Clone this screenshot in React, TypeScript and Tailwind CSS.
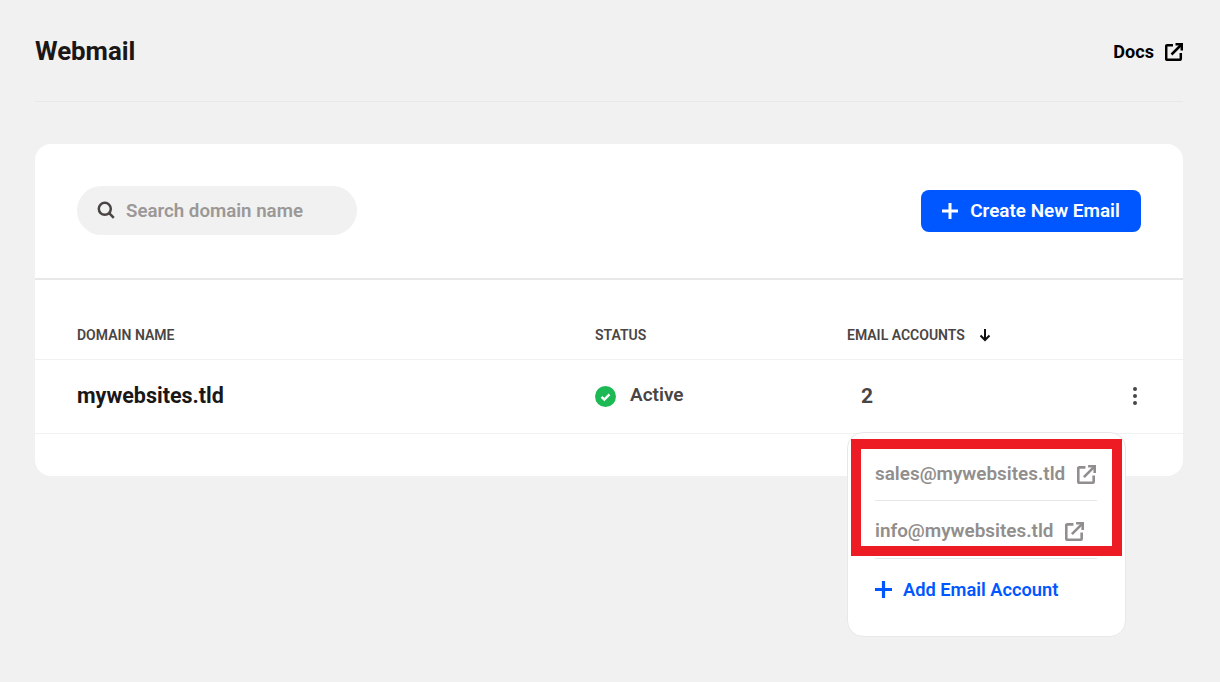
const font = { fontFamily: 'Roboto, sans-serif' };

function ExternalIcon({ className }: { className: string }) {
  return (
    <svg viewBox="0 0 18 18" fill="none" stroke="currentColor" strokeWidth="2.5" className={className}>
      <path d="M8 2.200H2.200a1 1 0 0 0-1 1v12.600a1 1 0 0 0 1 1h12.600a1 1 0 0 0 1-1V10" />
      <path d="M6.500 11.500 16.500 1.500" />
      <path d="M10.500 1.200h6.300v6.300" />
    </svg>
  );
}

function PlusIcon({ className }: { className: string }) {
  return (
    <svg viewBox="0 0 16 16" fill="none" stroke="currentColor" strokeWidth="3" className={className}>
      <path d="M8 0v16M0 8h16" />
    </svg>
  );
}

export default function App() {
  return (
    <div style={font} className="min-h-[682px] bg-[#f1f1f1] pl-[35px] pr-[37px]">
      <header className="flex h-[102px] items-center justify-between border-b border-[#e8e8e8] pt-[2px]">
        <h1 className="text-[25.800px] font-bold text-[#1a1716] leading-none">Webmail</h1>
        <a className="flex items-center gap-[11px] text-[18.100px] font-bold text-black leading-none">
          <span className="pt-[2px]">Docs</span>
          <ExternalIcon className="h-[18px] w-[18px]" />
        </a>
      </header>

      <section className="mt-[42px] h-[332px] rounded-[16px] bg-white">
        <div className="flex h-[136px] items-center justify-between border-b-2 border-[#e8e8e8] px-[42px]">
          <div className="mb-[2px] flex h-[49px] w-[280px] items-center gap-[11px] rounded-full bg-[#f1f1f1] pl-[20px]">
            <svg viewBox="0 0 18 18" fill="none" stroke="#4a4543" strokeWidth="2.500" className="h-[18px] w-[18px]">
              <circle cx="7.800" cy="7.800" r="6" />
              <path d="m12.200 12.200 4.600 4.600" />
            </svg>
            <span className="pt-[2px] text-[18.700px] font-semibold text-[#9b9897]">Search domain name</span>
          </div>
          <button className="flex h-[42px] w-[220px] items-center justify-center gap-[12px] rounded-[8px] bg-[#0057ff] text-[18.900px] font-semibold text-white">
            <PlusIcon className="h-[16px] w-[16px]" />
            <span className="pt-[1px]">Create New Email</span>
          </button>
        </div>

        <div className="grid h-[80px] grid-cols-[518px_252px_1fr] items-center border-b border-[#f1f1f1] px-[42px] pt-[31px] text-[14px] font-semibold text-[#4a4543]">
          <span>DOMAIN NAME</span>
          <span>STATUS</span>
          <span className="flex items-center gap-[14px]">
            EMAIL ACCOUNTS
            <svg viewBox="0 0 12 14" fill="none" stroke="#111" strokeWidth="2" className="h-[14px] w-[12px]">
              <path d="M6 1v11M1.500 7.500 6 12l4.500-4.500" />
            </svg>
          </span>
        </div>

        <div className="grid h-[74px] grid-cols-[518px_252px_1fr] items-center border-b border-[#f1f1f1] px-[42px]">
          <span className="text-[21.500px] font-bold text-[#1a1716]">mywebsites.tld</span>
          <span className="flex items-center gap-[14px] text-[19px] font-semibold text-[#4a4543]">
            <svg viewBox="0 0 21 21" className="h-[21px] w-[21px]">
              <circle cx="10.500" cy="10.500" r="10.500" fill="#1db954" />
              <path d="m6.500 10.800 2.800 2.700 5.200-5.200" fill="none" stroke="#fff" strokeWidth="2.400" />
            </svg>
            <span className="mb-[2px]">Active</span>
          </span>
          <div className="relative flex items-center justify-between">
            <span className="pl-[14px] text-[21px] font-bold text-[#4a4543]">2</span>
            <svg viewBox="0 0 4 18" fill="#4a4543" className="mb-[1px] mr-[4px] h-[18px] w-[4px]">
              <circle cx="2" cy="2" r="2" />
              <circle cx="2" cy="9" r="2" />
              <circle cx="2" cy="16" r="2" />
            </svg>

            <div className="absolute left-0 top-[51px] h-[205px] w-[279px] rounded-[16px] border border-[#e8e8e8] bg-white pl-[27px] pr-[28px]">
              <div className="flex h-[68px] items-center gap-[12px] border-b border-[#e8e8e8] pt-[16px] text-[18.900px] font-semibold text-[#918e8d]">
                sales@mywebsites.tld
                <ExternalIcon className="h-[19px] w-[19px]" />
              </div>
              <div className="flex h-[58px] items-center gap-[12px] border-b border-[#e8e8e8] pt-[4px] text-[18.900px] font-semibold text-[#918e8d]">
                info@mywebsites.tld
                <ExternalIcon className="h-[19px] w-[19px]" />
              </div>
              <div className="flex h-[61px] items-center gap-[11px] text-[18.250px] font-semibold text-[#0057ff]">
                <PlusIcon className="h-[17px] w-[17px]" />
                Add Email Account
              </div>
              <div className="absolute left-[3px] top-[6px] h-[117px] w-[271px] border-[10px] border-[#ed1c24]" />
            </div>
          </div>
        </div>
      </section>
    </div>
  );
}
